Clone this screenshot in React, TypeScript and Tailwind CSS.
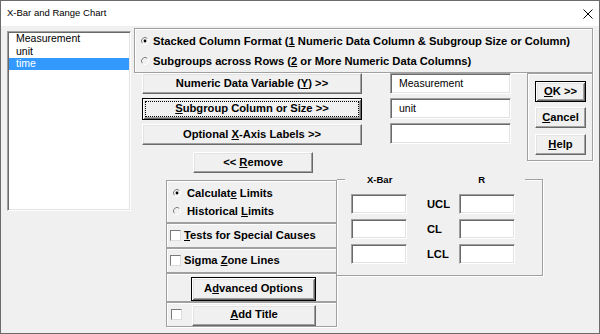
import type { ReactNode } from 'react';

const raised =
  'bg-[#f0f0f0] border border-t-white border-l-white border-r-[#696969] border-b-[#696969] shadow-[inset_-1px_-1px_0_#a0a0a0,inset_1px_1px_0_#e3e3e3]';
const defaultBtn =
  'bg-[#f0f0f0] border border-black shadow-[inset_1px_1px_0_#fff,inset_-1px_-1px_0_#696969,inset_2px_2px_0_#e3e3e3,inset_-2px_-2px_0_#a0a0a0]';
const sunken =
  'bg-white border border-t-[#a0a0a0] border-l-[#a0a0a0] border-r-white border-b-white shadow-[inset_1px_1px_0_#696969,inset_-1px_-1px_0_#e3e3e3]';
const etched = 'border border-[#a0a0a0] shadow-[inset_1px_1px_0_#fff,1px_1px_0_#fff]';

function Btn({ children, className = '', isDefault = false, focused = false }: { children: ReactNode; className?: string; isDefault?: boolean; focused?: boolean }) {
  return (
    <div
      className={`${isDefault ? defaultBtn : raised} flex items-center justify-center font-bold text-[11.2px] leading-none ${
        focused ? 'outline outline-dotted outline-black outline-offset-[-4px]' : ''
      } ${className}`}
    >
      <span className="whitespace-pre">{children}</span>
    </div>
  );
}

function Radio({ checked }: { checked?: boolean }) {
  return (
    <svg width="8" height="8" viewBox="0 0 8 8" className="shrink-0">
      <path d="M1.5 6.5 A3.5 3.5 0 0 1 6.5 1.5" stroke="#808080" fill="none" />
      <path d="M6.5 1.5 A3.5 3.5 0 0 1 1.5 6.5" stroke="#ffffff" fill="none" />
      {checked && <circle cx="4" cy="4" r="1.4" fill="#000" />}
    </svg>
  );
}

function Check() {
  return <div className="w-[11px] h-[11px] shrink-0 bg-white border border-t-[#7a7a7a] border-l-[#7a7a7a] border-r-[#dcdcdc] border-b-[#dcdcdc]" />;
}

function Field({ value = '', className = '' }: { value?: string; className?: string }) {
  return <div className={`${sunken} flex items-center text-[10.5px] ${className}`}>{value}</div>;
}

export default function App() {
  return (
    <div className="w-[600px] h-[334px] border border-[#6b6b6b] bg-[#f0f0f0] flex flex-col overflow-hidden text-black font-['Liberation_Sans',Arial,sans-serif]">
      <div className="h-[25px] shrink-0 bg-white flex items-center justify-between pl-[6px] pr-[6px]">
        <span className="text-[9.5px]">X-Bar and Range Chart</span>
        <svg width="10" height="10" viewBox="0 0 10 10">
          <path d="M0.5 0.5 L9.5 9.5 M9.5 0.5 L0.5 9.5" stroke="#000" strokeWidth="1" />
        </svg>
      </div>

      <div className="flex-1 flex items-start pl-[6px]">
        {/* variable list */}
        <div className={`${sunken} mt-[5px] w-[124px] h-[180px] p-[1px] text-[10.5px]`}>
          <div className="h-[12px] flex items-center pl-[7px]">Measurement</div>
          <div className="h-[13px] flex items-center pl-[7px]">unit</div>
          <div className="h-[12px] flex items-center pl-[7px] bg-[#3399ff] text-white">time</div>
        </div>

        <div className="ml-[3px] w-[460px] flex flex-col">
          {/* data format */}
          <div className={`${etched} mt-[2px] w-[459px] h-[45px] pt-[2px] pl-[6px] font-bold text-[11.2px]`}>
            <div className="h-[20px] flex items-center gap-[4px]">
              <Radio checked />
              <span>
                Stacked Column Format (<u>1</u> Numeric Data Column &amp; Subgroup Size or Column)
              </span>
            </div>
            <div className="h-[20px] flex items-center gap-[4px]">
              <Radio />
              <span>
                Subgroups across Rows (<u>2</u> or More Numeric Data Columns)
              </span>
            </div>
          </div>

          <div className="flex items-start">
            <div className="ml-[8px] w-[220px] flex flex-col">
              <Btn className="h-[21px]">
                Numeric Data Variable (<u>Y</u>) &gt;&gt;
              </Btn>
              <Btn className="h-[22px] mt-[4px]" isDefault focused>
                <u>S</u>ubgroup Column or Size &gt;&gt;
              </Btn>
              <Btn className="h-[21px] mt-[4px]">
                Optional <u>X</u>-Axis Labels &gt;&gt;
              </Btn>
              <Btn className="h-[21px] mt-[7px] ml-[51px] w-[120px]">
                &lt;&lt; <u>R</u>emove
              </Btn>
            </div>

            <div className="ml-[28px] w-[121px] flex flex-col gap-[4px]">
              <Field className="h-[21px] pl-[8px]" value="Measurement" />
              <Field className="h-[21px] pl-[8px]" value="unit" />
              <Field className="h-[21px] pl-[8px]" />
            </div>

            <div className={`${etched} ml-[16px] w-[66px] h-[88px] pt-[7px] pl-[7px] flex flex-col`}>
              <Btn className="w-[51px] h-[21px]" isDefault>
                <u>O</u>K &gt;&gt;
              </Btn>
              <Btn className="w-[51px] h-[21px] mt-[5px]">
                <u>C</u>ancel
              </Btn>
              <Btn className="w-[51px] h-[21px] mt-[6px]">
                <u>H</u>elp
              </Btn>
            </div>
          </div>

          <div className="flex items-start mt-[6px]">
            {/* options stack */}
            <div className="ml-[32px] mt-[1px] w-[171px] flex flex-col font-bold text-[11.2px]">
              <div className={`${etched} h-[43px] pt-[3px] pl-[6px]`}>
                <div className="h-[18px] flex items-center gap-[6px]">
                  <Radio checked />
                  <span>
                    Calculat<u>e</u> Limits
                  </span>
                </div>
                <div className="h-[18px] flex items-center gap-[6px]">
                  <Radio />
                  <span>
                    Historical <u>L</u>imits
                  </span>
                </div>
              </div>
              <div className={`${etched} h-[25px] pl-[3px] flex items-center gap-[3px]`}>
                <Check />
                <span>
                  <u>T</u>ests for Special Causes
                </span>
              </div>
              <div className={`${etched} h-[25px] pl-[3px] flex items-center gap-[3px]`}>
                <Check />
                <span>
                  Sigma <u>Z</u>one Lines
                </span>
              </div>
              <div className={`${etched} h-[29px] pt-[3px] pl-[24px]`}>
                <Btn className="w-[125px] h-[24px]" isDefault>
                  A<u>d</u>vanced Options
                </Btn>
              </div>
              <div className={`${etched} h-[25px] pl-[4px] flex items-center`}>
                <Check />
                <Btn className="ml-[10px] mt-[1px] w-[124px] h-[21px]">
                  <u>A</u>dd Title
                </Btn>
              </div>
            </div>

            {/* limits group */}
            <div className="w-[206px] h-[97px] border border-l-0 border-[#a0a0a0] shadow-[inset_0_1px_0_#fff,1px_1px_0_#fff] flex flex-col">
              <div className="-mt-[7px] ml-[8px] w-[180px] h-[14px] bg-[#f0f0f0] flex items-center pl-[22px] font-bold text-[9.5px]">
                <span>X-Bar</span>
                <span className="ml-[86px]">R</span>
              </div>
              <div className="ml-[14px] mt-[7px] grid grid-cols-[56px_52px_56px] gap-y-[5px] font-bold text-[11.2px]">
                <Field className="h-[20px]" />
                <div className="h-[20px] flex items-center pl-[20px]">UCL</div>
                <Field className="h-[20px]" />
                <Field className="h-[20px]" />
                <div className="h-[20px] flex items-center pl-[20px]">CL</div>
                <Field className="h-[20px]" />
                <Field className="h-[20px]" />
                <div className="h-[20px] flex items-center pl-[20px]">LCL</div>
                <Field className="h-[20px]" />
              </div>
            </div>
          </div>
        </div>
      </div>
    </div>
  );
}
